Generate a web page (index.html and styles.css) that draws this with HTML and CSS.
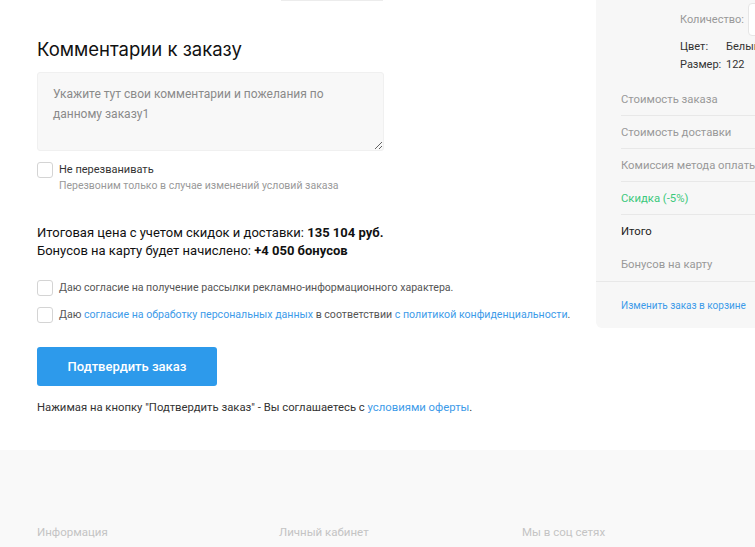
FILE: index.html
```html
<!DOCTYPE html>
<html lang="ru">
<head>
<meta charset="utf-8">
<title>Оформление заказа</title>
<link rel="stylesheet" href="styles.css">
</head>
<body>
<div class="page">
  <div class="main">
    <div class="top-edge"></div>
    <h2 class="title">Комментарии к заказу</h2>
    <div class="textarea-wrap">
      <textarea class="comment" placeholder="Укажите тут свои комментарии и пожелания по данному заказу1"></textarea>
    </div>
    <label class="check check-call">
      <span class="box"></span>
      <span class="check-text">
        <span class="check-title">Не перезванивать</span>
        <span class="check-sub">Перезвоним только в случае изменений условий заказа</span>
      </span>
    </label>
    <div class="summary">
      <p>Итоговая цена с учетом скидок и доставки: <b>135 104 руб.</b></p>
      <p>Бонусов на карту будет начислено: <b>+4 050 бонусов</b></p>
    </div>
    <label class="check agree">
      <span class="box"></span>
      <span class="agree-text">Даю согласие на получение рассылки рекламно-информационного характера.</span>
    </label>
    <label class="check agree">
      <span class="box"></span>
      <span class="agree-text">Даю <a href="#">согласие на обработку персональных данных</a> в соответствии <a href="#">с политикой конфиденциальности</a>.</span>
    </label>
    <button class="confirm" type="button">Подтвердить заказ</button>
    <p class="offer">Нажимая на кнопку "Подтвердить заказ" - Вы соглашаетесь с <a href="#">условиями оферты</a>.</p>
  </div>
  <aside class="aside">
    <div class="item">
      <div class="qty">
        <span class="qty-label">Количество:</span>
        <span class="qty-input"></span>
      </div>
      <div class="prop"><span class="prop-key">Цвет:</span><span>Белый</span></div>
      <div class="prop"><span class="prop-key">Размер:</span><span>122</span></div>
    </div>
    <div class="rows">
      <div class="row">Стоимость заказа</div>
      <div class="row">Стоимость доставки</div>
      <div class="row">Комиссия метода оплаты</div>
      <div class="row row-green">Скидка (-5%)</div>
      <div class="row row-total">Итого</div>
      <div class="row row-last">Бонусов на карту</div>
    </div>
    <div class="aside-foot"><a href="#">Изменить заказ в корзине</a></div>
  </aside>
</div>
<footer class="footer">
  <div class="footer-col">Информация</div>
  <div class="footer-col">Личный кабинет</div>
  <div class="footer-col">Мы в соц сетях</div>
</footer>
</body>
</html>
```
FILE: styles.css
```css
html, body {
  margin: 0;
  padding: 0;
  overflow: hidden;
  background: #fff;
}
body {
  font-family: Roboto, "Noto Sans", "DejaVu Sans", sans-serif;
  color: #222;
  width: 755px;
}
a { color: #3d9be9; text-decoration: none; }
p { margin: 0; }

.page {
  display: flex;
  align-items: flex-start;
  padding-left: 37px;
  height: 450px;
}
.main {
  width: 347px;
  flex-shrink: 0;
}
.top-edge {
  width: 102px;
  height: 1px;
  margin-left: auto;
  margin-right: 1px;
  background: #ececec;
}
.title {
  margin: 36px 0 0;
  font-family: Inter, Roboto, sans-serif;
  font-size: 18.5px;
  font-weight: 400;
  line-height: 24px;
  color: #111;
}
.textarea-wrap { margin-top: 11px; }
.comment {
  display: block;
  box-sizing: border-box;
  width: 347px;
  height: 79px;
  padding: 11px 15px;
  border: 1px solid #f0f0f0;
  border-radius: 3px;
  background: #f8f8f8;
  font-family: inherit;
  font-size: 12px;
  line-height: 20px;
  color: #333;
  resize: vertical;
  outline: none;
}
.comment::placeholder { color: #8a8a8a; }

.check {
  display: flex;
  align-items: flex-start;
  gap: 6px;
}
.box {
  flex-shrink: 0;
  box-sizing: border-box;
  width: 16px;
  height: 16px;
  border: 1px solid #d4d4d4;
  border-radius: 3px;
  background: #fff;
}
.check-call { margin-top: 11px; }
.check-text { display: flex; flex-direction: column; }
.check-title {
  font-size: 11px;
  line-height: 16px;
  color: #333;
}
.check-sub {
  font-size: 10.5px;
  line-height: 16px;
  color: #999;
}
.summary {
  margin-top: 30px;
  font-size: 13px;
  line-height: 18px;
  color: #111;
  white-space: nowrap;
}
.summary b { font-weight: 700; }
.agree {
  margin-top: 11px;
  width: 560px;
}
.summary + .agree { margin-top: 20px; }
.agree-text {
  font-size: 10.6px;
  line-height: 16px;
  color: #555;
  white-space: nowrap;
}
.confirm {
  display: block;
  margin-top: 24px;
  width: 180px;
  height: 39px;
  border: 0;
  border-radius: 3px;
  background: #2d9aeb;
  color: #fff;
  font-family: inherit;
  font-size: 13px;
  font-weight: 500;
}
.offer {
  margin-top: 14px;
  font-size: 11.3px;
  line-height: 16px;
  color: #333;
  white-space: nowrap;
}

.aside {
  margin-left: 212px;
  width: 250px;
  flex-shrink: 0;
  background: #f7f7f7;
  border-radius: 0 0 6px 6px;
}
.item {
  padding: 3px 0 0 84px;
  height: 83px;
  box-sizing: border-box;
  font-size: 11px;
  color: #333;
}
.qty {
  display: flex;
  align-items: center;
  gap: 4px;
  height: 33px;
}
.qty-label { color: #999; }
.qty-input {
  width: 60px;
  height: 33px;
  box-sizing: border-box;
  background: #fff;
  border: 1px solid #e6e6e6;
  border-radius: 4px;
}
.prop {
  display: flex;
  line-height: 18px;
}
.prop-key { width: 46px; }
.qty + .prop { margin-top: 2px; }
.rows { padding-left: 25px; }
.row {
  height: 33px;
  box-sizing: border-box;
  display: flex;
  align-items: center;
  border-bottom: 1px solid #e8e8e8;
  font-size: 11.3px;
  color: #999;
  white-space: nowrap;
}
.row-green { color: #3cc97c; }
.row-total { color: #222; border-bottom-color: transparent; }
.row-last { border-bottom: 0; }
.aside-foot {
  border-top: 1px solid #e8e8e8;
  padding: 16px 0 14px 25px;
  font-size: 10px;
  line-height: 16px;
}

.footer {
  display: grid;
  grid-template-columns: 242px 243px 242px;
  padding: 75px 0 0 37px;
  height: 97px;
  box-sizing: border-box;
  background: #f9f9f9;
  font-size: 11.5px;
  color: #c4c4c4;
}
```
